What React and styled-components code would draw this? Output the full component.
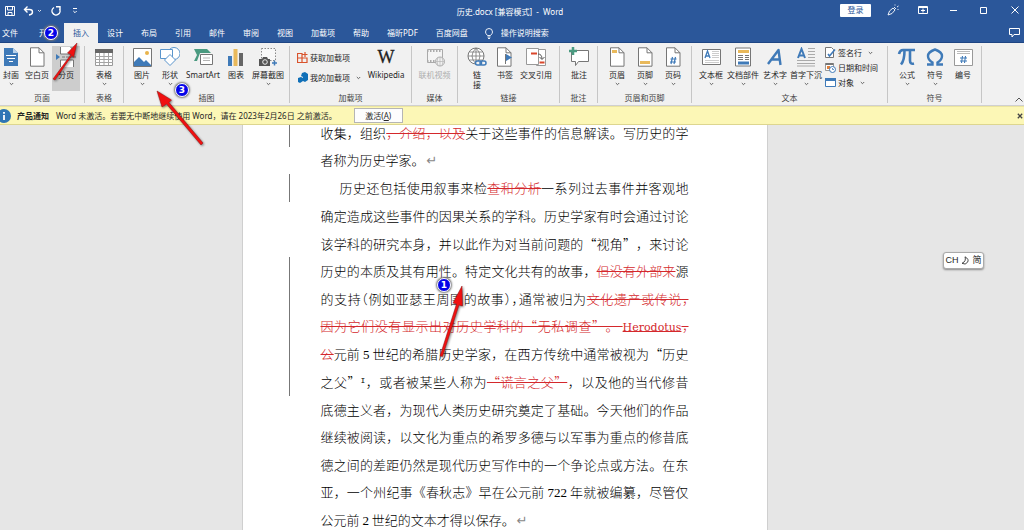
import React from "react";
import styled, { createGlobalStyle } from "styled-components";

const BLUE = "#2b579a";

const GlobalStyle = createGlobalStyle`
  * { box-sizing: border-box; }
  body { margin: 0; overflow: hidden; background: #e6e6e6; }
  button, input { font: inherit; color: inherit; border: 0; padding: 0; margin: 0; background: none; }
  svg { display: block; flex: none; }
`;

const Window = styled.div`
  position: relative;
  display: flex;
  flex-direction: column;
  height: 100vh;
  overflow: hidden;
  font: 8px/10px "Noto Sans", "Noto Sans CJK SC", sans-serif;
  color: #262626;
`;

/* ---------- title bar ---------- */
const TitleBar = styled.header`
  display: grid;
  grid-template-columns: 1fr auto 1fr;
  align-items: center;
  height: 23px;
  flex: none;
  background: ${BLUE};
  color: #fff;
`;
const QuickAccess = styled.div`
  display: flex;
  align-items: center;
  gap: 8px;
  padding-left: 5px;
  padding-bottom: 2px;
`;
const Title = styled.h1`
  margin: 0;
  padding-right: 4px;
  font-size: 8px;
  font-weight: 400;
  white-space: pre;
`;
const WindowControls = styled.div`
  display: flex;
  align-items: center;
  justify-content: flex-end;
  padding-bottom: 3px;
`;
const IconButton = styled.button`
  display: flex;
  align-items: center;
  justify-content: center;
  width: ${(p) => p.$w || "auto"};
`;
const CloseButton = styled(IconButton)`
  padding-left: 7px;
`;
const SignIn = styled.button`
  width: 31px;
  height: 13px;
  margin-right: 6px;
  background: #fff;
  color: ${BLUE};
  border-radius: 1px;
`;

/* ---------- tabs ---------- */
const TabBar = styled.nav`
  display: flex;
  height: 20px;
  flex: none;
  background: ${BLUE};
  color: #fff;
  box-shadow: inset 0 -1px #1e4583;
`;
const Tab = styled.button`
  padding: 0 9px;
  white-space: nowrap;
  background: ${(p) => (p.$active ? "#f1f1f1" : "none")};
  color: ${(p) => (p.$active ? BLUE : "#fff")};
  &:first-child { padding: 0 12px 0 2px; }
`;
const TellMe = styled.label`
  display: flex;
  align-items: center;
  gap: 8px;
  margin-left: 8px;
  input { width: 80px; outline: none; }
  input::placeholder { color: #fff; opacity: 1; }
`;
const CommentsButton = styled(IconButton)`
  margin-left: auto;
  padding-right: 4px;
`;

/* ---------- ribbon ---------- */
const Ribbon = styled.div`
  display: flex;
  height: 63px;
  flex: none;
  padding-top: 3px;
  background: #f1f1f1;
  border-bottom: 1px solid #d0d0d0;
`;
const Group = styled.section`
  display: flex;
  flex-direction: column;
  width: ${(p) => p.$w}px;
  height: 57px;
  border-right: 1px solid #c6c6c6;
  flex: none;
`;
const GroupBody = styled.div`
  display: flex;
  height: 45px;
  padding-left: ${(p) => p.$pad || 0}px;
`;
const GroupName = styled.div`
  margin-top: 2px;
  text-align: center;
  color: #444;
`;
const BigButton = styled.button`
  display: flex;
  flex-direction: column;
  align-items: center;
  width: ${(p) => p.$w || 28}px;
  height: 45px;
  flex: none;
  padding-top: 1px;
  white-space: nowrap;
  background: ${(p) => (p.$pressed ? "#cdcdcd" : "none")};
  color: ${(p) => (p.disabled ? "#adadad" : "#262626")};
  span { margin-top: 3px; width: max-content; }
`;
const Stack = styled.div`
  display: flex;
  flex-direction: column;
  gap: ${(p) => p.$gap}px;
  padding: ${(p) => p.$pad};
`;
const SmallButton = styled.button`
  display: flex;
  align-items: center;
  gap: 2px;
  white-space: nowrap;
  height: 11px;
  svg:nth-of-type(2) { margin-left: 4px; }
`;
const Collapse = styled.button`
  align-self: flex-end;
  margin: 0 1px 3px auto;
`;

/* ---------- notice ---------- */
const Notice = styled.div`
  display: flex;
  align-items: center;
  height: 19px;
  flex: none;
  background: #fcf7b6;
  border-top: 1px solid #ece5a0;
  border-bottom: 1px solid #ddd68f;
  strong { margin: 0 7px 0 6px; }
  p { margin: 0; white-space: pre; }
`;
const Activate = styled.button`
  width: 49px;
  height: 15px;
  margin-left: 17px;
  background: #fdfdfd;
  border: 1px solid #b5b5b5;
`;
const NoticeClose = styled.button`
  margin: 0 1px 0 auto;
`;

/* ---------- document ---------- */
const Workspace = styled.main`
  display: flex;
  justify-content: center;
  flex: 1;
  min-height: 0;
  overflow: hidden;
  padding-right: 15px;
  background: #e6e6e6;
`;
const Page = styled.article`
  display: flex;
  flex-direction: column;
  width: 526px;
  margin: -6px 0 -4px;
  padding: 0 78px 0 46px;
  background: #fff;
  border: solid #cfcfcf;
  border-width: 0 1px;
  font: 300 13px/16px "Noto Sans CJK SC", sans-serif;
  text-spacing-trim: space-all;
  color: #000;
`;
const Line = styled.div`
  display: flex;
  align-items: center;
  flex: 1;
  border-left: 1px solid ${(p) => (p.$changed ? "#777" : "transparent")};
  padding-left: ${(p) => (p.$indent ? 50 : 31)}px;
  p {
    flex: 1;
    margin: 0;
    white-space: nowrap;
    text-align-last: ${(p) => (p.$short ? "left" : "justify")};
  }
`;
const Deleted = styled.del`
  color: #d4282c;
  text-decoration: line-through 1px;
`;
const Latin = styled.span`
  font-family: "Liberation Serif", serif;
  font-weight: 400;
`;
const LatinWide = styled.span`
  font: 400 11px/16px "DejaVu Serif", serif;
`;
const Tight = styled.span`
  font-feature-settings: "halt";
`;
const Mark = styled.span`
  margin-left: 2px;
  color: #888;
  font: 400 13px/16px "DejaVu Sans", sans-serif;
`;
const Note = styled.sup`
  font: 400 8px/8px "Liberation Mono", monospace;
  vertical-align: 4px;
`;

/* ---------- floating items ---------- */
const ImeBar = styled.div`
  position: absolute;
  right: 40px;
  top: 252px;
  display: flex;
  align-items: center;
  justify-content: center;
  gap: 3px;
  width: 41px;
  height: 17px;
  border: 1px solid #aaa;
  border-radius: 3px;
  background: #fff;
  box-shadow: 0 1px 2px #888;
  font: 9px/11px "Liberation Sans", "Noto Sans CJK SC", sans-serif;
`;
const Badge = styled.div`
  position: absolute;
  left: ${(p) => p.$x}px;
  top: ${(p) => p.$y}px;
  width: 14px;
  height: 14px;
  border: 1px solid #fff;
  border-radius: 50%;
  background: #0505e8;
  box-shadow: 0 0 2px 1px #777;
  color: #fff;
  font: 700 9px/12px "DejaVu Sans", sans-serif;
  text-align: center;
`;
const Arrows = styled.svg`
  position: absolute;
  left: 0;
  top: 0;
  pointer-events: none;
  filter: drop-shadow(1px 1px 1px #0007);
`;

/* ---------- drawings ---------- */
const G = "#767676";
const B = "#3f7ab8";
const Icon = ({ children, w = 20, h = 20 }) => (
  <svg width={w} height={h} viewBox={`0 0 ${w} ${h}`} fill="none" aria-hidden="true">{children}</svg>
);
const Chevron = ({ c = "#555" }) => (
  <Icon w={5} h={8}><path d="M.8 3l1.7 1.7L4.2 3" stroke={c} strokeWidth=".9" /></Icon>
);
const Sheet = ({ x = 3, children }) => (
  <>
    <path d={`M${x + .5} .8h8.5l5 5v13.4h-13.500z`} fill="#fff" stroke={G} />
    <path d={`M${x + 9} .8v5h5`} stroke={G} />
    {children}
  </>
);

const icons = {
  cover: (
    <Icon>
      <path d="M3 1h9l5 5v13H3z" fill={B} /><path d="M12 1v5h5z" fill="#b9d2ea" />
      <path d="M5 8.500h10M6 11.500h8M8 14.500h4" stroke="#fff" />
    </Icon>
  ),
  blank: <Icon><Sheet /></Icon>,
  pageBreak: (
    <Icon>
      <path d="M4.500 0v7h13V3l-3-3M4.500 20v-7h13v7" fill="#fff" stroke={G} />
      <path d="M6 10h14" stroke={G} strokeDasharray="3 1" /><path d="M0 7l4 3-4 3z" fill={B} />
    </Icon>
  ),
  table: (
    <Icon>
      <path d="M1.500 2.500h17v16h-17z" fill="#fff" stroke="#999" /><path d="M1 2h18v4H1z" fill="#666" />
      <path d="M1 9.500h18M1 12.500h18M1 15.500h18M5.500 6v12M10 6v12M14.500 6v12" stroke="#a5a5a5" />
    </Icon>
  ),
  picture: (
    <Icon>
      <path d="M1.500 1.500h18v18h-18z" fill="#fff" stroke={G} />
      <path d="M2 19v-4l5-5 5 5 2-2 5 5v1z" fill={B} /><circle cx="15" cy="6" r="2" fill="#e9b44c" />
    </Icon>
  ),
  shapes: (
    <Icon>
      <circle cx="14" cy="6.500" r="6" fill="#fff" stroke="#5a95cc" />
      <path d="M.500 2.500h12v9H.500z" fill="#fff" stroke="#5a95cc" />
      <path d="M10 7.500l5.500 5.500-5.500 5.500L4.500 13z" fill="#fff" stroke="#5a95cc" />
    </Icon>
  ),
  smart: (
    <Icon>
      <path d="M1 2h13l4 4H7L4 14H1l3-6z" fill="#4a9a80" />
      <path d="M7.500 7.500h12v10h-12z" fill="#fff" stroke={G} /><path d="M10 11h7M10 13.500h7" stroke="#b5b5b5" />
    </Icon>
  ),
  chart: (
    <Icon>
      <path d="M2 9h4v10H2z" fill={B} /><path d="M7.500 2h4v17h-4z" fill="#e9b95b" /><path d="M13 6h4v13h-4z" fill="#666" />
    </Icon>
  ),
  screenshot: (
    <Icon>
      <path d="M3.500 1.500h14v12h-14z" fill="#f8f8f8" stroke="#888" strokeDasharray="1.500 1.500" />
      <path d="M1 12h3l1-2h4l1 2h2v7H1z" fill="#555" /><circle cx="7" cy="15" r="2.300" fill="#555" stroke="#eee" />
      <path d="M16.500 13.500v5M14 16h5" stroke={B} strokeWidth="1.500" />
    </Icon>
  ),
  video: (
    <Icon>
      <path d="M2.500 2.500h15v13h-15z" fill="#f4f4f4" stroke="#aaa" /><path d="M2 4h16M2 14h10" stroke="#aaa" strokeWidth="2" strokeDasharray="1.500 1.500" />
      <circle cx="15" cy="14.500" r="4.500" fill="#f1f1f1" stroke="#aaa" /><path d="M10.500 14.500h9M15 10v9M13 10.500q-2 4 0 8M17 10.500q2 4 0 8" stroke="#b5b5b5" strokeWidth=".7" />
    </Icon>
  ),
  link: (
    <Icon>
      <circle cx="9" cy="9" r="8" fill="#fff" stroke={G} />
      <path d="M1 9h16M9 1v16M2.500 5h13M2.500 13h13M9 1q-8 8 0 16M9 1q8 8 0 16" stroke={G} strokeWidth=".8" />
      <rect x="8.500" y="14" width="6" height="4" rx="2" fill="#f1f1f1" stroke={B} strokeWidth="1.500" />
      <rect x="13" y="14" width="6" height="4" rx="2" stroke={B} strokeWidth="1.500" />
    </Icon>
  ),
  bookmark: <Icon><Sheet x={2} /><path d="M10.500 7v10" stroke={G} /><path d="M11 7l6 3.500-6 3.500z" fill={B} /></Icon>,
  crossref: (
    <Icon>
      <path d="M10.500 2.500h9v16h-9z" fill="#fff" stroke="#999" /><path d="M.500 1.500h12v16H.500z" fill="#fff" stroke="#999" />
      <path d="M5 6.500h6M13.500 15.500h5" stroke="#d9472b" strokeWidth="2" /><path d="M12 7q4 0 4 5M13.500 10l2.500 2.500L18.500 10" stroke="#555" />
    </Icon>
  ),
  comment: (
    <Icon>
      <path d="M2.500 3.500h17v11h-10l-3 4v-4h-4z" fill="#fff" stroke={G} /><path d="M4 0v8M0 4h8" stroke="#4a9a80" strokeWidth="2.500" />
    </Icon>
  ),
  header: <Icon><Sheet><path d="M5 3h5v3H5z" fill="#e9b95b" /></Sheet></Icon>,
  footer: <Icon><Sheet><path d="M5 14h10v3H5z" fill="#e9b95b" /></Sheet></Icon>,
  pageNo: <Icon><Sheet><path d="M9.500 10l-1.500 7M12.500 10L11 17M7.500 12h6M7 15h6" stroke={B} strokeWidth="1.200" /></Sheet></Icon>,
  textbox: (
    <Icon>
      <path d="M1.500 2.500h18v15h-18z" fill="#fff" stroke={G} /><path d="M4 11l2.500-7L9 11M5 9h3" stroke={B} strokeWidth="1.300" />
      <path d="M11 4.500h7M11 6.500h7M11 8.500h7M11 10.500h7M4 13.500h14M4 15.500h14" stroke="#ccc" />
    </Icon>
  ),
  parts: (
    <Icon>
      <path d="M2.500 1h15v18h-15z" fill="#fff" stroke={G} /><path d="M5 3h11v3H5z" fill="#e9b95b" />
      <path d="M5 8.500h5M5 10.500h5M5 12.500h5M12 8.500h4M12 10.500h4M12 12.500h4" stroke={G} /><path d="M5 14.500h11v3H5z" fill={B} />
    </Icon>
  ),
  wordart: <Icon><path d="M3 17L13.500 3l2 15M7 12.500h8" stroke={B} strokeWidth="2.400" strokeLinejoin="round" /></Icon>,
  dropcap: (
    <Icon>
      <path d="M2 11L5.500 2 9 11M3.500 8.500h4.500" stroke={B} strokeWidth="2" />
      <path d="M12 1.500h7M12 4.500h7M12 7.500h7M12 10.500h7M1 13.500h18M1 16.500h18M1 19h18" stroke="#aaa" />
    </Icon>
  ),
  pi: <Icon><path d="M2 7q1-4 4-4h12M7.500 3.500q0 10-3.500 14M13 3.500v10q0 4 4 3" stroke={B} strokeWidth="2.600" /></Icon>,
  omega: <Icon><path d="M2 17.500h5.500v-2Q3 13 3 9t7-6.500Q17 5 17 9t-4.500 6.500v2H18" stroke={B} strokeWidth="2.400" /></Icon>,
  number: (
    <Icon>
      <path d="M1.500 2.500h18v16h-18z" fill="#fff" stroke="#999" /><path d="M4 4.500h13M4 6.500h13" stroke="#bbb" />
      <path d="M9.500 9l-1 7M12.500 9l-1 7M7 11h7M7 14h7" stroke={B} strokeWidth="1.100" />
    </Icon>
  ),
  wiki: (
    <Icon>
      <text x="10" y="16" textAnchor="middle" fontFamily="Liberation Serif, serif" fontSize="18" stroke="#222" strokeWidth=".3" fill="#222">W</text>
    </Icon>
  ),
};

const BIG = ({ icon, label, w, arrow, ...rest }) => (
  <BigButton $w={w} {...rest}>
    {icons[icon]}
    <span>{label}</span>
    {arrow && <Chevron />}
  </BigButton>
);

const tabs = ["文件", "开始", "插入", "设计", "布局", "引用", "邮件", "审阅", "视图", "加载项", "帮助", "福昕PDF", "百度网盘"];

export default function App() {
  return (
    <Window lang="zh-CN">
      <GlobalStyle />
      <TitleBar>
        <QuickAccess>
          <IconButton aria-label="保存">
            <Icon w={10} h={10}><path d="M.500 .500h9v9h-9zM2.500 .500v3.500h5V.500M3 9.500v-3h4v3" stroke="#fff" /></Icon>
          </IconButton>
          <IconButton aria-label="撤消">
            <Icon w={20} h={10}>
              <path d="M4.500 .500L1.500 3.500l3 3M2 3.500h4.500q3 0 3 2.500T6 9" stroke="#fff" strokeWidth="1.400" />
              <path d="M15 4l1.500 1.500L18 4" stroke="#fff" strokeWidth=".8" />
            </Icon>
          </IconButton>
          <IconButton aria-label="恢复">
            <Icon w={10} h={10}><path d="M3 1.500A4 4 0 1 0 8.500 3M5 .800h4v3.500" stroke="#fff" strokeWidth="1.400" /></Icon>
          </IconButton>
          <IconButton aria-label="自定义快速访问工具栏" $w="12px">
            <Icon w={6} h={8}><path d="M1 1.500h4M1.300 4L3 5.700 4.700 4" stroke="#fff" /></Icon>
          </IconButton>
        </QuickAccess>
        <Title>{"历史.docx [兼容模式]  -  Word"}</Title>
        <WindowControls>
          <SignIn>登录</SignIn>
          <IconButton $w="31px" aria-label="墨迹">
            <Icon w={12} h={12}><path d="M1 11l1.500-4L6 4l2 2-3 3.500zM7 3l2 2M8 1.500v-1M10 3l1.500-1M10.500 5.500h1" stroke="#fff" strokeWidth=".9" /></Icon>
          </IconButton>
          <IconButton $w="30px" aria-label="功能区显示选项">
            <Icon w={10} h={8}><path d="M.500 .500h9v7h-9zM.500 1.500h9M5 6.500v-4M3 4.500h4" stroke="#fff" /></Icon>
          </IconButton>
          <IconButton $w="30px" aria-label="最小化"><Icon w={7} h={7}><path d="M0 3.500h7" stroke="#fff" /></Icon></IconButton>
          <IconButton $w="31px" aria-label="最大化"><Icon w={7} h={7}><path d="M.500 .500h6v6h-6z" stroke="#fff" /></Icon></IconButton>
          <CloseButton $w="25px" aria-label="关闭"><Icon w={8} h={8}><path d="M.500 .500l7 7M7.500 .500l-7 7" stroke="#fff" /></Icon></CloseButton>
        </WindowControls>
      </TitleBar>

      <TabBar>
        {tabs.map((t) => <Tab key={t} $active={t === "插入"}>{t}</Tab>)}
        <TellMe>
          <Icon w={8} h={11}><path d="M2.500 7.500Q.500 5.500.500 4a3.500 3.500 0 0 1 7 0Q7.500 5.500 5.500 7.500zM2.500 9h3M3 10.500h2" stroke="#fff" strokeWidth=".9" /></Icon>
          <input type="text" placeholder="操作说明搜索" aria-label="操作说明搜索" />
        </TellMe>
        <CommentsButton aria-label="批注">
          <Icon w={11} h={10}><path d="M.500 .500h10v6H5L3 9V6.500H.500z" stroke="#fff" /></Icon>
        </CommentsButton>
      </TabBar>

      <Ribbon>
        <Group $w={85}>
          <GroupBody>
            <BIG icon="cover" label="封面" w={22} arrow />
            <BIG icon="blank" label="空白页" w={30} />
            <BIG icon="pageBreak" label="分页" w={28} $pressed />
          </GroupBody>
          <GroupName>页面</GroupName>
        </Group>
        <Group $w={39}>
          <GroupBody $pad={5}><BIG icon="table" label="表格" arrow /></GroupBody>
          <GroupName>表格</GroupName>
        </Group>
        <Group $w={166}>
          <GroupBody $pad={4}>
            <BIG icon="picture" label="图片" arrow />
            <BIG icon="shapes" label="形状" arrow />
            <BIG icon="smart" label="SmartArt" w={38} />
            <BIG icon="chart" label="图表" />
            <BIG icon="screenshot" label="屏幕截图" w={36} arrow />
          </GroupBody>
          <GroupName>插图</GroupName>
        </Group>
        <Group $w={122}>
          <GroupBody $pad={7}>
            <Stack $gap={9} $pad="6px 4px 0 0">
              <SmallButton>
                <Icon w={11} h={11}><path d="M.500 1.500h4.500v4.500H.500zM.500 6h4.500v4.500H.500zM5 6h5v4.500H5zM8 0v5M5.500 2.500h5" stroke="#d9532c" strokeWidth="1.200" /></Icon>
                获取加载项
              </SmallButton>
              <SmallButton>
                <Icon w={11} h={11}><path d="M5 1l3-1 3 2v6l-3 2-2-1V5L4 4z" fill="#1070b8" /><path d="M1 6l3-1 2 1v3l-3 2-2-1z" fill="#1070b8" /></Icon>
                我的加载项
                <Chevron />
              </SmallButton>
            </Stack>
            <BIG icon="wiki" label="Wikipedia" w={42} />
          </GroupBody>
          <GroupName>加载项</GroupName>
        </Group>
        <Group $w={46}>
          <GroupBody><BIG icon="video" label="联机视频" w={45} disabled /></GroupBody>
          <GroupName>媒体</GroupName>
        </Group>
        <Group $w={102}>
          <GroupBody $pad={5}>
            <BIG icon="link" label={<>链<br />接</>} />
            <BIG icon="bookmark" label="书签" />
            <BIG icon="crossref" label="交叉引用" w={34} />
          </GroupBody>
          <GroupName>链接</GroupName>
        </Group>
        <Group $w={38}>
          <GroupBody $pad={5}><BIG icon="comment" label="批注" /></GroupBody>
          <GroupName>批注</GroupName>
        </Group>
        <Group $w={94}>
          <GroupBody $pad={5}>
            <BIG icon="header" label="页眉" arrow />
            <BIG icon="footer" label="页脚" arrow />
            <BIG icon="pageNo" label="页码" arrow />
          </GroupBody>
          <GroupName>页眉和页脚</GroupName>
        </Group>
        <Group $w={196}>
          <GroupBody $pad={5}>
            <BIG icon="textbox" label="文本框" arrow />
            <BIG icon="parts" label="文档部件" w={36} arrow />
            <BIG icon="wordart" label="艺术字" arrow />
            <BIG icon="dropcap" label="首字下沉" w={34} arrow />
            <Stack $gap={4} $pad="1px 0 0 2px">
              <SmallButton>
                <Icon w={11} h={11}><path d="M.500 .500h6l2 2v8h-8z" fill="#fff" stroke={G} /><path d="M3 7l1.500 2L10 2.500" stroke={B} strokeWidth="1.600" /></Icon>
                签名行
                <Chevron />
              </SmallButton>
              <SmallButton>
                <Icon w={11} h={11}><path d="M.500 1.500h8v7h-8z" fill="#fff" stroke="#999" /><path d="M.500 2h8" stroke="#777" strokeWidth="2" /><path d="M2 4h3v3H2z" fill="#e0803a" /><circle cx="7.500" cy="7.500" r="3" fill="#fff" stroke={B} /><path d="M7.500 6v1.500H9" stroke={B} strokeWidth=".8" /></Icon>
                日期和时间
              </SmallButton>
              <SmallButton>
                <Icon w={11} h={11}><path d="M.500 1.500h10v8H.500z" fill="#fff" stroke={B} /><path d="M0 1h11v3H0z" fill={B} /></Icon>
                对象
                <Chevron />
              </SmallButton>
            </Stack>
          </GroupBody>
          <GroupName>文本</GroupName>
        </Group>
        <Group $w={94}>
          <GroupBody $pad={5}>
            <BIG icon="pi" label="公式" arrow />
            <BIG icon="omega" label="符号" arrow />
            <BIG icon="number" label="编号" />
          </GroupBody>
          <GroupName>符号</GroupName>
        </Group>
        <Collapse aria-label="折叠功能区">
          <Icon w={8} h={5}><path d="M.500 4.500L4 1l3.500 3.500" stroke="#555" /></Icon>
        </Collapse>
      </Ribbon>

      <Notice role="status">
        <Icon w={11} h={14}><circle cx="4" cy="7" r="7" fill="#2f75b5" /><path d="M4 6v5M4 3v1.800" stroke="#fff" strokeWidth="1.800" /></Icon>
        <strong>产品通知</strong>
        <p>Word 未激活。若要无中断地继续使用 Word，请在 2023年2月26日 之前激活。</p>
        <Activate>激活(<u>A</u>)</Activate>
        <NoticeClose aria-label="关闭消息">
          <Icon w={6} h={6}><path d="M.800 .800l4.400 4.400M5.200 .800L.800 5.200" stroke="#444" strokeWidth="1.300" /></Icon>
        </NoticeClose>
      </Notice>

      <Workspace>
        <Page>
          <Line $changed><p>收集，组织<Deleted>，介绍，以及</Deleted>关于这些事件的信息解读。写历史的学</p></Line>
          <Line $short><p>者称为历史学家。<Mark>↵</Mark></p></Line>
          <Line $changed $indent><p>历史还包括使用叙事来检<Deleted>查和分析</Deleted>一系列过去事件并客观地</p></Line>
          <Line><p>确定造成这些事件的因果关系的学科。历史学家有时会通过讨论</p></Line>
          <Line><p>该学科的研究本身，并以此作为对当前问题的“视角”，来讨论</p></Line>
          <Line $changed><p>历史的本质及其有用性。特定文化共有的故事，<Deleted>但没有外部来</Deleted>源</p></Line>
          <Line $changed><p>的支持<Tight>（</Tight>例如亚瑟王周围的故事<Tight>），</Tight>通常被归为<Deleted>文化遗产或传说<Tight>，</Tight></Deleted></p></Line>
          <Line $changed><p><Deleted>因为它们没有显示出对历史学科的“无私调查”。 <LatinWide>Herodotus</LatinWide><Tight>，</Tight></Deleted></p></Line>
          <Line $changed><p><Deleted>公</Deleted>元前 <Latin>5</Latin> 世纪的希腊历史学家，在西方传统中通常被视为“历史</p></Line>
          <Line $changed><p>之父”<Note>I</Note>，或者被某些人称为<Deleted>“谎言之父”</Deleted>，以及他的当代修昔</p></Line>
          <Line><p>底德主义者，为现代人类历史研究奠定了基础。今天他们的作品</p></Line>
          <Line><p>继续被阅读，以文化为重点的希罗多德与以军事为重点的修昔底</p></Line>
          <Line><p>德之间的差距仍然是现代历史写作中的一个争论点或方法。在东</p></Line>
          <Line><p>亚，一个州纪事《春秋志》早在公元前 <Latin>722</Latin> 年就被编纂，尽管仅</p></Line>
          <Line $short><p>公元前 <Latin>2</Latin> 世纪的文本才得以保存。<Mark>↵</Mark></p></Line>
        </Page>
      </Workspace>

      <ImeBar>
        <span>CH</span>
        <Icon w={8} h={9}><path d="M4 .800q1.500 4.500-3 6.500 3.500 2 5.500-1T4 .800z" stroke="#333" strokeWidth=".9" /></Icon>
        <span>简</span>
      </ImeBar>

      <Arrows width="480" height="370" aria-hidden="true">
        <g fill="#f01010" stroke="#8c1010" strokeWidth=".5">
          <path d="M53 79L71 54.500 67.500 53 77 43 73.500 57.500 72 55.500 55 80z" />
          <path d="M203 143L169 102.500 171.500 100 157 91 162 107 166.500 104 201 145z" />
          <path d="M440 356L456.500 304 453 303 462 286 462.500 306 459 305 442.500 356.500z" />
        </g>
      </Arrows>
      <Badge $x={44} $y={26}>2</Badge>
      <Badge $x={175} $y={83}>3</Badge>
      <Badge $x={437} $y={278}>1</Badge>
    </Window>
  );
}
